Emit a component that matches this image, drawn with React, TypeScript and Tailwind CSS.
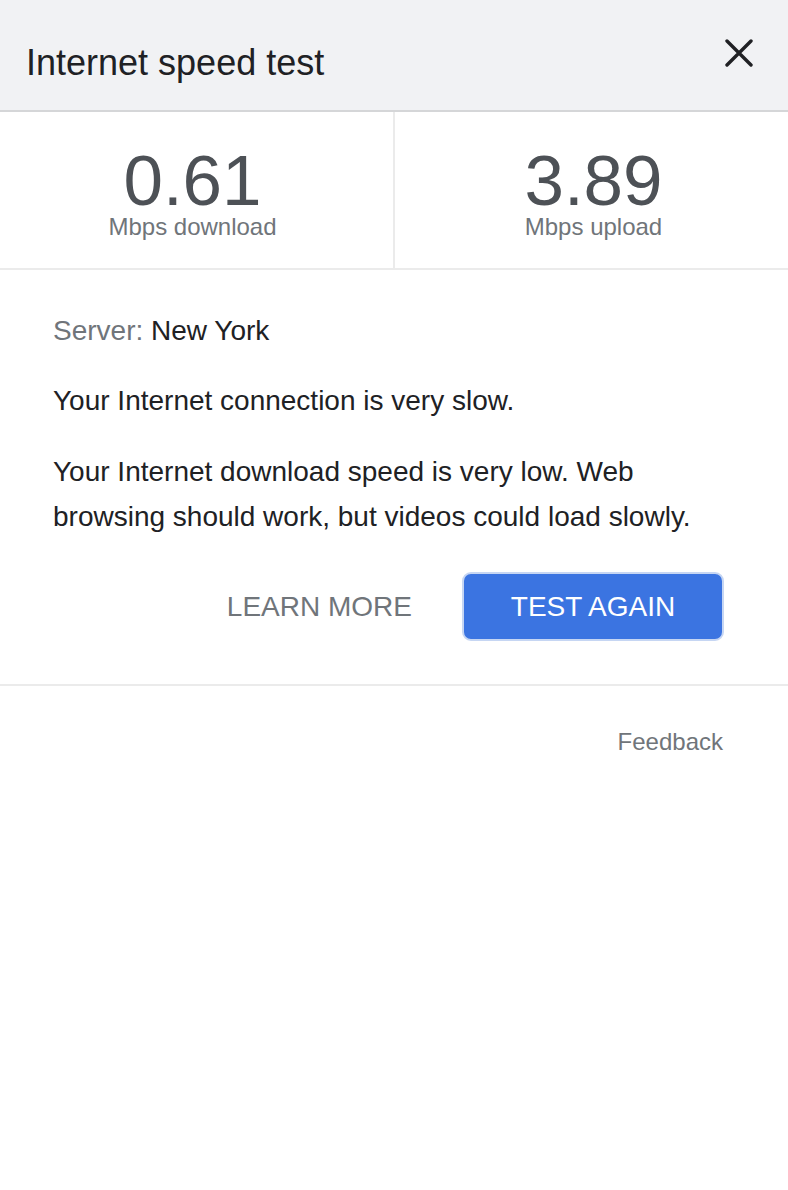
function Stat({ value, label, className }: { value: string; label: string; className?: string }) {
  return (
    <div className={"flex flex-col items-center pt-[37px] " + (className ?? "")}>
      <div className="text-[71px] leading-[64px] text-[#4d5156]">{value}</div>
      <div className="text-[24px] leading-[28px] text-[#70757a]">{label}</div>
    </div>
  );
}

export default function App() {
  return (
    <div className="min-h-[1190px] w-full bg-white font-['Liberation_Sans',Arial,sans-serif]">
      {/* header */}
      <div className="flex h-[112px] items-center justify-between border-b-2 border-[#d5d6d8] bg-[#f1f2f4] pl-[26px] pr-[35px]">
        <h1 className="pt-[16px] text-[36px] text-[#202124]">Internet speed test</h1>
        <svg width="28" height="28" viewBox="0 0 28 28" className="mb-[5px]">
          <path d="M2 2L26 26M26 2L2 26" stroke="#202124" strokeWidth="3.4" strokeLinecap="round" />
        </svg>
      </div>

      {/* results */}
      <div className="flex h-[158px] border-b-2 border-[#ebebeb]">
        <Stat value="0.61" label="Mbps download" className="w-[393px] pr-[8px]" />
        <div className="w-[2px] bg-[#ebebeb]" />
        <Stat value="3.89" label="Mbps upload" className="flex-1 pl-[4px]" />
      </div>

      {/* details */}
      <div className="pl-[53px] pr-[64px] pt-[38px] text-[28px] leading-[45px] text-[#202124]">
        <p>
          <span className="text-[#70757a]">Server: </span>New York
        </p>
        <p className="mt-[25px]">Your Internet connection is very slow.</p>
        <p className="mt-[26px]">
          Your Internet download speed is very low. Web browsing should work, but videos could load slowly.
        </p>
        <div className="mt-[33px] flex items-center justify-end gap-[50px]">
          <button className="text-[28px] text-[#70757a]">LEARN MORE</button>
          <button className="h-[69px] w-[262px] rounded-[9px] border-2 border-[#c6d6f3] bg-[#3b74e1] text-[28px] text-white">
            TEST AGAIN
          </button>
        </div>
      </div>

      <div className="mt-[43px] border-t-2 border-[#ebebeb]" />

      <div className="flex justify-end pr-[65px] pt-[38px]">
        <span className="text-[24px] text-[#70757a]">Feedback</span>
      </div>
    </div>
  );
}
